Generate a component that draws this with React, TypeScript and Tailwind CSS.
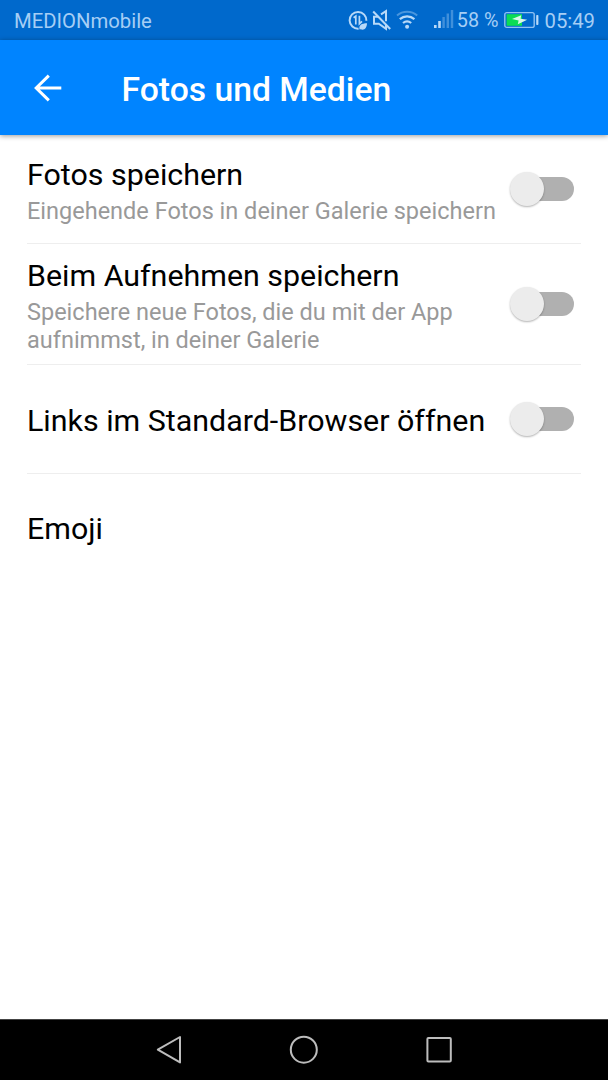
import { useState } from 'react';
import clsx from 'clsx';

interface Setting {
    title: string;
    description?: string;
    hasToggle: boolean;
    rowClass: string;
}

const settings: Setting[] = [
    {
        title: 'Fotos speichern',
        description: 'Eingehende Fotos in deiner Galerie speichern',
        hasToggle: true,
        rowClass: 'h-[109px]',
    },
    {
        title: 'Beim Aufnehmen speichern',
        description: 'Speichere neue Fotos, die du mit der App aufnimmst, in deiner Galerie',
        hasToggle: true,
        rowClass: 'h-[121px]',
    },
    {
        title: 'Links im Standard-Browser öffnen',
        hasToggle: true,
        rowClass: 'h-[109px]',
    },
    {
        title: 'Emoji',
        hasToggle: false,
        rowClass: 'h-[107px]',
    },
];

const StatusIcons = () => (
    <svg width="70" height="24" viewBox="0 0 70 24" fill="none" stroke="#b8d9f8" className="shrink-0">
        {/* data saver */}
        <path d="M18.4 12.8A8.4 8.4 0 1 0 10.6 20.7" strokeWidth="2" />
        <path d="M5.6 9.8L7.8 8.2v8.2M11.4 7.8v8l2.6-2.4" strokeWidth="1.7" />
        <path d="M11.6 21.6c-1.2-4.4 2-6.4 7.4-6.4-.2 4.8-2.8 7.6-6.4 6z" fill="#b8d9f8" stroke="none" />
        {/* muted speaker */}
        <path d="M30.2 8.8H26v7h4.8l7.2 5v-4.2M33 6.4l5-3.2v10" strokeWidth="2" />
        <path d="M25.2 3.5l17 17.5" strokeWidth="2" />
        {/* wifi */}
        <path d="M49 7.4c5.8-4.8 14.4-4.8 20.2 0" strokeWidth="2" opacity=".4" />
        <path d="M51.8 11.2c4.2-3.7 10.4-3.7 14.6 0M55 15c2.4-2 5.8-2 8.2 0" strokeWidth="2.2" />
        <circle cx="59.1" cy="18.8" r="2" fill="#b8d9f8" stroke="none" />
    </svg>
);

const SignalIcon = () => (
    <svg width="20" height="20" viewBox="0 0 20 20" fill="#b8d9f8" className="shrink-0">
        <rect x="0" y="15" width="2.6" height="3" />
        <rect x="4.2" y="11" width="2.6" height="7" />
        <g opacity=".35">
            <rect x="8.4" y="7" width="2.4" height="11" />
            <rect x="12.6" y="3.5" width="2.4" height="14.5" />
            <rect x="16.8" y="0" width="2.4" height="18" />
        </g>
    </svg>
);

const BatteryIcon = () => (
    <svg width="35" height="18" viewBox="0 0 35 18" className="shrink-0">
        <rect x=".8" y="1.6" width="29.4" height="14.8" rx="2" fill="none" stroke="#8fc1f2" strokeWidth="1.4" />
        <rect x="2.6" y="3.2" width="15.4" height="11.6" fill="#0bdc55" />
        <path d="M8 8l9.2-3.8-.6 3.6 6.6 1-9.4 4.4.8-3.6z" fill="#d8f8e8" />
        <rect x="32.2" y="4" width="2.2" height="10" rx=".8" fill="#b8d9f8" />
    </svg>
);

const Toggle = ({ label }: { label: string }) => {
    const [checked, setChecked] = useState(false)

    return (
        <button
            role="switch"
            aria-checked={checked}
            aria-label={label}
            className="relative mr-[7px] flex h-[35px] w-[65px] shrink-0 items-center justify-end"
            onClick={() => setChecked(!checked)}
        >
            <span className={clsx('h-6 w-14 rounded-full', checked ? 'bg-[#80c2ff]' : 'bg-[#b0b0b0]')} />
            <span
                className={clsx(
                    'absolute top-0 size-[34.5px] rounded-full shadow-[0_1px_2px_rgba(0,0,0,0.3)]',
                    checked ? 'right-0 bg-[#0084ff]' : 'left-[0.5px] bg-[#ececec]',
                )}
            />
        </button>
    )
};

const SettingRow = ({ title, description, hasToggle, rowClass, last }: Setting & { last: boolean }) => (
    <li className={clsx('flex items-center justify-between', rowClass, !last && 'border-b border-[#eeeeee]')}>
        <div className={clsx('w-[475px]', description ? 'pt-1' : 'pt-[3px]')}>
            <h2 className="text-[30.4px] leading-9 whitespace-nowrap text-black">{title}</h2>
            {description && (
                <p className="mt-1 text-[23.5px] leading-7 text-[#999999]">{description}</p>
            )}
        </div>
        {hasToggle && <Toggle label={title} />}
    </li>
);

export default function App() {
    return (
        <div className="flex h-[1080px] w-[608px] flex-col overflow-hidden bg-white font-[Roboto,sans-serif]">
            <div className="flex h-10 shrink-0 items-center bg-[#0069cc] pr-[13px] pl-[14px] text-[20.3px] text-[#a6cef5]">
                <span className="pt-0.5">MEDIONmobile</span>
                <div className="ml-auto flex items-center">
                    <StatusIcons />
                    <span className="ml-4"><SignalIcon /></span>
                    <span className="ml-[3px] pt-px text-[19.8px] whitespace-nowrap">58 %</span>
                    <span className="ml-[6px]"><BatteryIcon /></span>
                    <span className="ml-[5px] pt-0.5">05:49</span>
                </div>
            </div>

            <header className="z-10 flex h-[95px] shrink-0 items-center bg-[#0084ff] pl-[33.5px] shadow-[0_1px_5px_rgba(0,0,0,0.4)]">
                <button aria-label="Zurück">
                    <svg width="28" height="28" viewBox="0 0 28 28" fill="none" stroke="white" strokeWidth="3">
                        <path d="M27.3 14H2M14.8 1.6L2.2 14l12.6 12.4" />
                    </svg>
                </button>
                <h1 className="ml-[60px] pt-[5px] text-[33.7px] font-medium whitespace-nowrap text-white">Fotos und Medien</h1>
            </header>

            <ul className="grow px-[27px]">
                {settings.map((setting, i) => (
                    <SettingRow key={setting.title} {...setting} last={i === settings.length - 1} />
                ))}
            </ul>

            <nav className="flex h-[61px] shrink-0 items-center justify-center border-t border-[#444444] bg-black">
                <svg width="298" height="30" viewBox="0 0 298 30" fill="none" stroke="#bdbdbd" strokeWidth="2" strokeLinejoin="round">
                    <path d="M2.8 14.7L25 2v25.4z" />
                    <circle cx="148.8" cy="14.7" r="13" />
                    <rect x="272.4" y="3" width="23.4" height="23.4" rx="1" />
                </svg>
            </nav>
        </div>
    )
}
